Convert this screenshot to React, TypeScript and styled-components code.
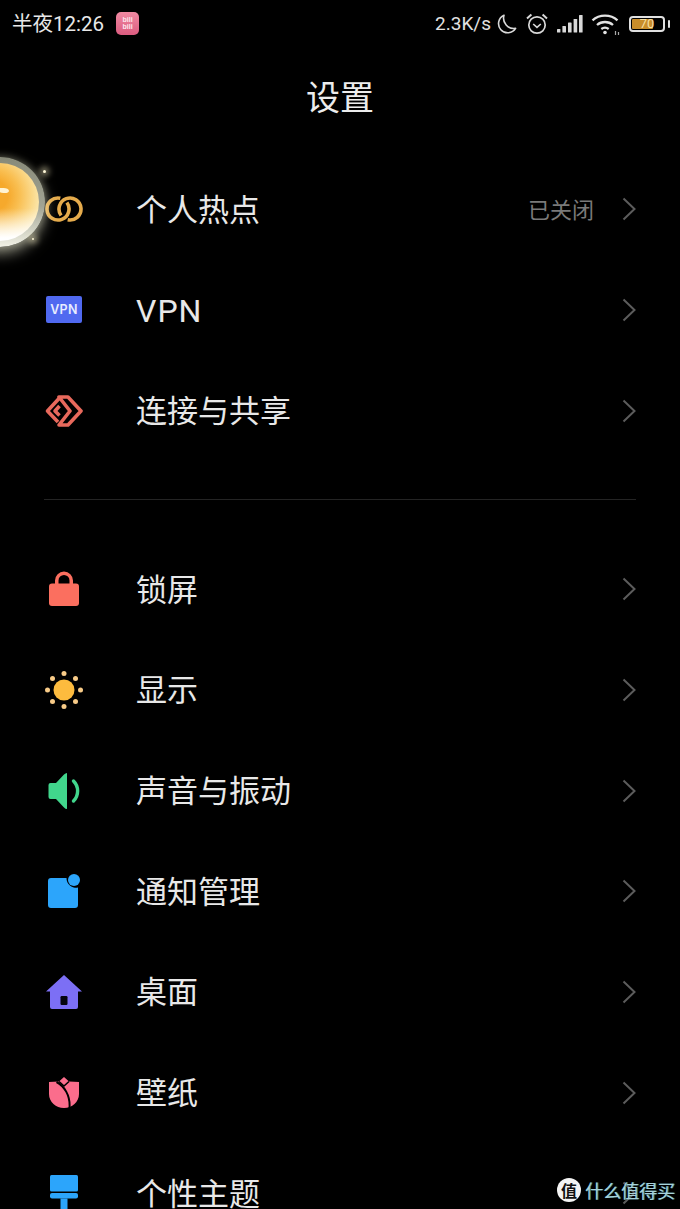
import styled, { createGlobalStyle } from 'styled-components'
import type { ReactNode } from 'react'

const GlobalStyle = createGlobalStyle`
	html, body {
		margin: 0;
		padding: 0;
		background: #000;
	}
	body {
		font-family: 'Roboto', 'Noto Sans CJK SC', sans-serif;
	}
`

const Screen = styled.div`
	position: relative;
	width: 680px;
	height: 1209px;
	overflow: hidden;
	background: #000;
	color: #f2f2f2;
`

const StatusBar = styled.header`
	display: flex;
	align-items: center;
	justify-content: space-between;
	height: 46px;
	padding: 1px 10px 0 12px;
	box-sizing: border-box;
`

const StatusLeft = styled.div`
	display: flex;
	align-items: center;
	gap: 12px;
`

const StatusRight = styled.div`
	display: flex;
	align-items: center;
	gap: 8px;
`

const Clock = styled.span`
	font-size: 20.5px;
	line-height: 44px;
	color: #e8e8e8;
`

const Speed = styled.span`
	font-size: 19px;
	color: #e2e2e2;
	margin-right: -4px;
`

const Header = styled.h1`
	margin: 0;
	height: 113px;
	padding-bottom: 14px;
	box-sizing: border-box;
	display: flex;
	align-items: center;
	justify-content: center;
	font-size: 34px;
	font-weight: 400;
	color: #ececec;
`

const Section = styled.section`
	display: flex;
	flex-direction: column;
`

const Row = styled.div`
	display: flex;
	align-items: center;
	height: 100.67px;
	padding: 0 44px;
	box-sizing: border-box;
`

const IconSlot = styled.div`
	display: flex;
	align-items: center;
	justify-content: center;
	width: 40px;
	height: 40px;
	margin-right: 52px;
`

const Label = styled.span<{ $latin?: boolean }>`
	flex: 1;
	font-size: ${p => (p.$latin ? '32px' : '31px')};
	letter-spacing: ${p => (p.$latin ? '1px' : '0')};
	padding: ${p => (p.$latin ? '3px 0 0' : '0 0 4px')};
	color: #e8e8e8;
	white-space: nowrap;
`

const Value = styled.span`
	font-size: 22px;
	color: #7a7a7a;
	margin-right: 28px;
	padding-bottom: 3px;
`

const Divider = styled.hr`
	height: 1px;
	border: 0;
	background: #242424;
	margin: 38px 44px 39px;
`

const VpnBadge = styled.div`
	display: flex;
	align-items: center;
	justify-content: center;
	width: 36px;
	height: 27px;
	border-radius: 2px;
	background: #5069f0;
	color: #e8ecff;
	font-family: 'Inter', 'Liberation Sans', sans-serif;
	font-size: 12.5px;
	font-weight: 600;
	letter-spacing: 0.3px;
`

const AppBadge = styled.div`
	display: flex;
	align-items: center;
	justify-content: center;
	text-align: center;
	width: 23px;
	height: 23px;
	margin-top: -1px;
	border-radius: 5px;
	background: linear-gradient(#f08aa2, #dc5c80);
	color: #fde7ee;
	font-family: 'Liberation Sans', sans-serif;
	font-size: 7px;
	font-weight: 700;
	line-height: 7px;
`

const BatteryBody = styled.div`
	position: relative;
	display: flex;
	align-items: center;
	justify-content: center;
	width: 36px;
	height: 16px;
	box-sizing: border-box;
	border: 2px solid #e0e0e0;
	border-radius: 4px;
	font-size: 13px;
	color: #f6dfa0;
	overflow: hidden;
`

const BatteryCell = styled.div`
	display: flex;
	align-items: center;
	gap: 3px;
`

const BatteryFill = styled.div`
	position: absolute;
	left: 1px;
	top: 1px;
	bottom: 1px;
	background: #c98d2a;
	border-radius: 1px;
`

const BatteryLevel = styled.span`
	position: relative;
	line-height: 12px;
`

const BatteryTip = styled.div`
	width: 2px;
	height: 8px;
	border-radius: 1px;
	background: #e0e0e0;
`

const FloatingBall = styled.div`
	position: absolute;
	left: -45px;
	top: 157px;
	width: 90px;
	height: 90px;
	padding: 6px;
	box-sizing: border-box;
	border-radius: 50%;
	background: linear-gradient(#878978 0%, #a2a494 55%, #f2f2e6 100%);
	box-shadow: 0 7px 14px rgba(255, 255, 230, 0.5), 0 0 8px rgba(255, 255, 210, 0.3);
`

const BallCore = styled.div`
	position: relative;
	width: 100%;
	height: 100%;
	border-radius: 50%;
	background: linear-gradient(rgba(255, 255, 255, 0) 58%, #fff 96%),
		radial-gradient(circle at 40% 42%, #f6a92c 0 24%, #f9bf52 42%, #fbd98a 62%, #fdf0c4 82%);

	&::after {
		content: '';
		position: absolute;
		left: 38px;
		top: 25px;
		width: 10px;
		height: 5px;
		border-radius: 20% 60% 50% 50%;
		background: #fff3d2;
	}
`

const Spark = styled.div<{ $x: number; $y: number; $size: number }>`
	position: absolute;
	left: ${p => p.$x}px;
	top: ${p => p.$y}px;
	width: ${p => p.$size}px;
	height: ${p => p.$size}px;
	border-radius: 50%;
	background: #fff8d8;
	box-shadow: 0 0 6px 3px rgba(255, 245, 200, 0.55);
`

const Watermark = styled.div`
	position: absolute;
	right: 5px;
	bottom: 6px;
	display: flex;
	align-items: center;
	gap: 4px;
`

const WatermarkLogo = styled.div`
	display: flex;
	align-items: center;
	justify-content: center;
	width: 24px;
	height: 24px;
	border-radius: 50%;
	background: #f4f4f4;
	color: #111;
	font-size: 16px;
	font-weight: 700;
`

const WatermarkText = styled.span`
	font-size: 18px;
	color: #a8d2da;
	text-shadow: 1px 0 #3f8a99;
	white-space: nowrap;
`

const Chevron = () => (
	<svg width='14' height='24' viewBox='0 0 14 24' fill='none' aria-hidden>
		<path d='M1.5 1.5 12.5 12 1.5 22.5' stroke='#5c5c5c' strokeWidth='2' />
	</svg>
)

const Moon = () => (
	<svg width='22' height='22' viewBox='0 0 22 22' fill='none'>
		<path
			d='M9 2.200A9.200 9.200 0 1 0 20.600 15.400 10.400 10.400 0 0 1 9 2.200Z'
			stroke='#d8d8d8'
			strokeWidth='1.600'
			strokeLinejoin='round'
		/>
	</svg>
)

const Alarm = () => (
	<svg width='24' height='24' viewBox='0 0 24 24' fill='none' stroke='#d8d8d8'>
		<circle cx='12' cy='13' r='8.200' strokeWidth='1.700' />
		<path d='M8.200 12l3.800 3.400 3.800-3.400' strokeWidth='1.600' />
		<path d='M2 6.400 6.400 2.400M22 6.400 17.600 2.400' strokeWidth='2' />
	</svg>
)

const Signal = () => (
	<svg width='26' height='18' viewBox='0 0 26 18' fill='#d8d8d8'>
		<rect x='0' y='14' width='3.400' height='3.500' rx='.6' />
		<rect x='5.400' y='11' width='3.600' height='6.500' rx='.6' />
		<rect x='11' y='7.500' width='3.600' height='10' rx='.6' />
		<rect x='16.600' y='4' width='3.600' height='13.500' rx='.6' />
		<rect x='22' y='0' width='3.600' height='17.500' rx='.6' />
	</svg>
)

const Wifi = () => (
	<svg width='30' height='24' viewBox='0 0 30 24' fill='none' stroke='#e2e2e2' strokeWidth='2.300'>
		<path d='M1.500 8.400C8.400 2 19.600 2 26.500 8.400' />
		<path d='M6 13c4.500-4 11.500-4 16 0' />
		<path d='M10.300 17c2.200-1.700 5.200-1.700 7.400 0' />
		<circle cx='14' cy='20.500' r='1.800' fill='#e2e2e2' stroke='none' />
		<path d='M24.500 19v4M27.500 20v3' strokeWidth='1.200' stroke='#aaa' />
	</svg>
)

const HotspotIcon = () => (
	<svg width='38' height='26' viewBox='0 0 38 26' fill='none' stroke='#e5ab4c' strokeWidth='3.600'>
		<path d='M21.900 6.530A11 11 0 1 1 15.300 2.240' />
		<path d='M16.100 19.470A11 11 0 1 1 22.700 23.760' />
	</svg>
)

const ConnectIcon = () => (
	<svg width='38' height='32' viewBox='0 0 38 32' fill='none' stroke='#e8695c' strokeWidth='3.600' strokeLinejoin='round'>
		<path d='M14 3.500 2.500 16 13 27' />
		<path d='M14 2h9l13 14-13 14h-9l11-14L14 2Z' />
		<path d='M14.500 11 10 16l4.500 4.500' />
	</svg>
)

const LockIcon = () => (
	<svg width='32' height='36' viewBox='0 0 32 36' fill='#fb6f5f'>
		<path d='M7 14V9.500a9 9 0 0 1 18 0V14h-3.500V9.500a5.500 5.500 0 0 0-11 0V14Z' />
		<rect x='1' y='12.500' width='30' height='22.500' rx='3' />
	</svg>
)

const SunIcon = () => (
	<svg width='38' height='38' viewBox='0 0 38 38'>
		<circle cx='19' cy='19' r='10.500' fill='#fdbb3e' />
		<g fill='#f8cb88'>
			<circle cx='19' cy='2.500' r='2.500' />
			<circle cx='19' cy='35.500' r='2.500' />
			<circle cx='2.500' cy='19' r='2.500' />
			<circle cx='35.500' cy='19' r='2.500' />
			<circle cx='7.500' cy='7.500' r='2.500' />
			<circle cx='30.500' cy='7.500' r='2.500' />
			<circle cx='7.500' cy='30.500' r='2.500' />
			<circle cx='30.500' cy='30.500' r='2.500' />
		</g>
	</svg>
)

const SoundIcon = () => (
	<svg width='33' height='38' viewBox='0 0 33 38' fill='none'>
		<path d='M19 1v36c-1 0-2-.5-3-1.500L8 27H2.500A2 2 0 0 1 .5 25V13a2 2 0 0 1 2-2H8l8-8.500c1-1 2-1.500 3-1.500Z' fill='#41d68c' />
		<path d='M25.500 9c5.500 5.500 5.500 14.500 0 20' stroke='#41d68c' strokeWidth='3.400' strokeLinecap='round' />
	</svg>
)

const NotifyIcon = () => (
	<svg width='32' height='34' viewBox='0 0 32 34'>
		<path d='M3 4h15.500a9.500 9.500 0 0 0 11.500 9.500V31a3 3 0 0 1-3 3H3a3 3 0 0 1-3-3V7a3 3 0 0 1 3-3Z' fill='#2ca5fb' />
		<circle cx='26' cy='6' r='6' fill='#2ca5fb' />
	</svg>
)

const HomeIcon = () => (
	<svg width='36' height='34' viewBox='0 0 36 34'>
		<path d='M18 0 36 16.500H32V32a2 2 0 0 1-2 2H6a2 2 0 0 1-2-2V16.500H0Z' fill='#7c6ff5' />
		<rect x='14.500' y='21' width='7' height='9' rx='1.200' fill='#05050f' />
	</svg>
)

const TulipIcon = () => (
	<svg width='30' height='31' viewBox='0 0 30 31'>
		<path d='M15 0l5 4.500L30 5v12c0 8-7 14-15 14S0 25 0 17V5l10-.5Z' fill='#fb6d8c' />
		<g fill='none' stroke='#000'>
			<path d='M7.500 5C15 9 21.500 18 20.500 31' strokeWidth='2' />
			<path d='M10 4.500 15 9l5-4.500' strokeWidth='1.600' />
		</g>
	</svg>
)

const BrushIcon = () => (
	<svg width='28' height='36' viewBox='0 0 28 36' fill='#2ca5fb'>
		<rect x='0' y='0' width='28' height='16.500' rx='1.500' />
		<rect x='0' y='18' width='28' height='5.500' rx='2' />
		<rect x='10.500' y='23.500' width='7' height='12.500' />
	</svg>
)

interface SettingsRowProps {
	icon: ReactNode
	label: string
	value?: string
	latin?: boolean
}

const SettingsRow = ({ icon, label, value, latin }: SettingsRowProps) => (
	<Row>
		<IconSlot>{icon}</IconSlot>
		<Label $latin={latin}>{label}</Label>
		{value && <Value>{value}</Value>}
		<Chevron />
	</Row>
)

export default function App() {
	return (
		<Screen>
			<GlobalStyle />
			<StatusBar>
				<StatusLeft>
					<Clock>半夜12:26</Clock>
					<AppBadge>
						bili
						<br />
						bili
					</AppBadge>
				</StatusLeft>
				<StatusRight>
					<Speed>2.3K/s</Speed>
					<Moon />
					<Alarm />
					<Signal />
					<Wifi />
					<BatteryCell>
						<BatteryBody>
							<BatteryFill style={{ width: `${70 * 0.3}px` }} />
							<BatteryLevel>70</BatteryLevel>
						</BatteryBody>
						<BatteryTip />
					</BatteryCell>
				</StatusRight>
			</StatusBar>
			<Header>设置</Header>
			<Section>
				<SettingsRow icon={<HotspotIcon />} label='个人热点' value='已关闭' />
				<SettingsRow icon={<VpnBadge>VPN</VpnBadge>} label='VPN' latin />
				<SettingsRow icon={<ConnectIcon />} label='连接与共享' />
			</Section>
			<Divider />
			<Section>
				<SettingsRow icon={<LockIcon />} label='锁屏' />
				<SettingsRow icon={<SunIcon />} label='显示' />
				<SettingsRow icon={<SoundIcon />} label='声音与振动' />
				<SettingsRow icon={<NotifyIcon />} label='通知管理' />
				<SettingsRow icon={<HomeIcon />} label='桌面' />
				<SettingsRow icon={<TulipIcon />} label='壁纸' />
				<SettingsRow icon={<BrushIcon />} label='个性主题' />
			</Section>
			<FloatingBall>
				<BallCore />
			</FloatingBall>
			<Spark $x={43} $y={170} $size={3} />
			<Spark $x={32} $y={238} $size={2} />
			<Watermark>
				<WatermarkLogo>值</WatermarkLogo>
				<WatermarkText>什么值得买</WatermarkText>
			</Watermark>
		</Screen>
	)
}
